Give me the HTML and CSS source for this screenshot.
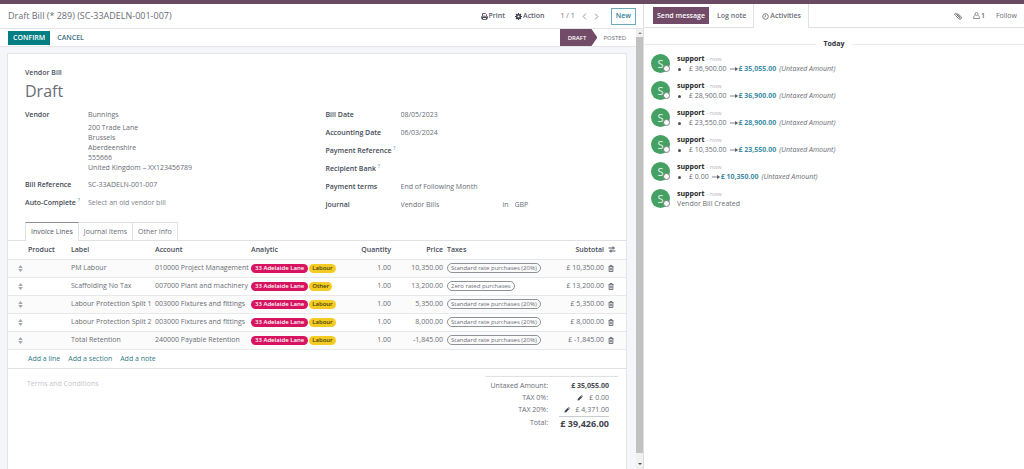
FILE: index.html
```html
<!DOCTYPE html>
<html lang="en">
<head>
<meta charset="utf-8">
<title>Draft Bill (* 289) (SC-33ADELN-001-007)</title>
<link rel="stylesheet" href="styles.css">
</head>
<body>
<svg class="defs" aria-hidden="true">
  <symbol id="trash" viewBox="0 0 12 14"><path d="M1 3.200h10M4 3V1h4v2M2.200 3.500V13h7.600V3.500M4.600 5.500v5.300M7.400 5.500v5.300" fill="none" stroke="currentColor" stroke-width="1.500"/></symbol>
  <symbol id="sort" viewBox="0 0 8 12"><path d="M4 0l4 5H0zM4 12L0 7h8z" fill="currentColor"/></symbol>
  <symbol id="pencil" viewBox="0 0 14 14"><path d="M1 13l1-4 7-7 3 3-7 7zM9.800 1.200L11 0l3 3-1.200 1.200z" fill="currentColor"/></symbol>
  <symbol id="arrow" viewBox="0 0 16 8"><path d="M0 4h12M11 1l4 3-4 3z" fill="currentColor" stroke="currentColor" stroke-width="1.400"/></symbol>
</svg>
<header class="navbar"></header>
<div class="layout">
  <main class="pane">
    <div class="control">
      <h1 class="crumb">Draft Bill (* 289) (SC-33ADELN-001-007)</h1>
      <div class="tools">
        <button class="tool"><svg class="ico" viewBox="0 0 14 14"><path d="M3 6V1h6l2 2v3M1 11V7.500Q1 6.500 2 6.500h10q1 0 1 1V11h-2V9H3v2zM3 9h8v4H3z" fill="none" stroke="currentColor" stroke-width="1.600"/></svg>Print</button>
        <button class="tool"><svg class="ico" viewBox="0 0 14 14"><circle cx="7" cy="7" r="3.700" fill="none" stroke="currentColor" stroke-width="3"/><path d="M7 0v3M7 11v3M0 7h3M11 7h3M2 2l2 2M10 10l2 2M12 2l-2 2M4 10l-2 2" stroke="currentColor" stroke-width="2.400"/></svg>Action</button>
      </div>
      <div class="pager">
        <span>1 / 1</span>
        <button class="page" aria-label="Previous"><svg viewBox="0 0 6 10"><path d="M5 1L1 5l4 4" fill="none" stroke="currentColor" stroke-width="1.400"/></svg></button>
        <button class="page" aria-label="Next"><svg viewBox="0 0 6 10"><path d="M1 1l4 4-4 4" fill="none" stroke="currentColor" stroke-width="1.400"/></svg></button>
      </div>
      <button class="new">New</button>
    </div>
    <div class="body">
      <div class="content">
        <div class="statusbar">
          <button class="confirm">CONFIRM</button>
          <button class="cancel">CANCEL</button>
          <div class="states"><span class="state current">DRAFT</span><span class="state">POSTED</span></div>
        </div>
        <div class="backdrop">
          <section class="sheet">
            <div class="title">
              <div class="kind">Vendor Bill</div>
              <h2 class="name">Draft</h2>
            </div>
            <div class="groups">
              <div class="group">
                <div class="field tall"><label for="vendor">Vendor</label>
                  <div><input id="vendor" value="Bunnings">
                  <address>200 Trade Lane<br>Brussels<br>Aberdeenshire<br>555666<br>United Kingdom – XX123456789</address></div></div>
                <div class="field"><label for="ref">Bill Reference</label><input id="ref" value="SC-33ADELN-001-007"></div>
                <div class="field"><label for="auto">Auto-Complete <sup>?</sup></label><input id="auto" placeholder="Select an old vendor bill"></div>
              </div>
              <div class="group wide">
                <div class="field"><label for="bdate">Bill Date</label><input id="bdate" value="08/05/2023"></div>
                <div class="field"><label for="adate">Accounting Date</label><input id="adate" value="06/03/2024"></div>
                <div class="field"><label for="pref">Payment Reference <sup>?</sup></label><input id="pref"></div>
                <div class="field"><label for="bank">Recipient Bank <sup>?</sup></label><input id="bank"></div>
                <div class="field"><label for="terms">Payment terms</label><input id="terms" value="End of Following Month"></div>
                <div class="field"><label for="journal">Journal</label><div class="journal"><input id="journal" value="Vendor Bills"><label class="in" for="currency">in</label><input id="currency" value="GBP"></div></div>
              </div>
            </div>
            <div class="tabs" role="tablist">
              <button class="tab active" role="tab" aria-selected="true">Invoice Lines</button>
              <button class="tab" role="tab">Journal Items</button>
              <button class="tab" role="tab">Other Info</button>
            </div>
            <table class="lines">
              <colgroup><col class="c-handle"><col class="c-product"><col class="c-label"><col class="c-account"><col class="c-analytic"><col class="c-qty"><col class="c-price"><col class="c-taxes"><col class="c-sub"><col class="c-del"></colgroup>
              <thead><tr><th></th><th>Product</th><th>Label</th><th>Account</th><th>Analytic</th><th class="num">Quantity</th><th class="num">Price</th><th>Taxes</th><th class="num">Subtotal</th><th><button class="icon" aria-label="Columns"><svg class="slide" viewBox="0 0 16 14"><path d="M1 4h13M10 1v6M2 10h13M6 7v6" stroke="currentColor" stroke-width="1.800"/></svg></button></th></tr></thead>
              <tbody>
                <tr><td><svg class="sort"><use href="#sort"/></svg></td><td></td><td>PM Labour</td><td>010000 Project Management</td><td><span class="tag pink">33 Adelaide Lane</span><span class="tag yellow">Labour</span></td><td class="num">1.00</td><td class="num">10,350.00</td><td><span class="tax">Standard rate purchases (20%)</span></td><td class="num">£ 10,350.00</td><td><button class="icon" aria-label="Delete"><svg class="trash"><use href="#trash"/></svg></button></td></tr>
                <tr><td><svg class="sort"><use href="#sort"/></svg></td><td></td><td>Scaffolding No Tax</td><td>007000 Plant and machinery</td><td><span class="tag pink">33 Adelaide Lane</span><span class="tag yellow">Other</span></td><td class="num">1.00</td><td class="num">13,200.00</td><td><span class="tax">Zero rated purchases</span></td><td class="num">£ 13,200.00</td><td><button class="icon" aria-label="Delete"><svg class="trash"><use href="#trash"/></svg></button></td></tr>
                <tr><td><svg class="sort"><use href="#sort"/></svg></td><td></td><td>Labour Protection Split 1</td><td>003000 Fixtures and fittings</td><td><span class="tag pink">33 Adelaide Lane</span><span class="tag yellow">Labour</span></td><td class="num">1.00</td><td class="num">5,350.00</td><td><span class="tax">Standard rate purchases (20%)</span></td><td class="num">£ 5,350.00</td><td><button class="icon" aria-label="Delete"><svg class="trash"><use href="#trash"/></svg></button></td></tr>
                <tr><td><svg class="sort"><use href="#sort"/></svg></td><td></td><td>Labour Protection Split 2</td><td>003000 Fixtures and fittings</td><td><span class="tag pink">33 Adelaide Lane</span><span class="tag yellow">Labour</span></td><td class="num">1.00</td><td class="num">8,000.00</td><td><span class="tax">Standard rate purchases (20%)</span></td><td class="num">£ 8,000.00</td><td><button class="icon" aria-label="Delete"><svg class="trash"><use href="#trash"/></svg></button></td></tr>
                <tr><td><svg class="sort"><use href="#sort"/></svg></td><td></td><td>Total Retention</td><td>240000 Payable Retention</td><td><span class="tag pink">33 Adelaide Lane</span><span class="tag yellow">Labour</span></td><td class="num">1.00</td><td class="num">-1,845.00</td><td><span class="tax">Standard rate purchases (20%)</span></td><td class="num">£ -1,845.00</td><td><button class="icon" aria-label="Delete"><svg class="trash"><use href="#trash"/></svg></button></td></tr>
              </tbody>
            </table>
            <div class="adds"><a href="#">Add a line</a><a href="#">Add a section</a><a href="#">Add a note</a></div>
            <div class="footer">
              <textarea class="terms" aria-label="Terms and Conditions" placeholder="Terms and Conditions"></textarea>
              <dl class="totals">
                <dt>Untaxed Amount:</dt><dd class="bold">£ 35,055.00</dd>
                <dt>TAX 0%:</dt><dd><svg class="pencil"><use href="#pencil"/></svg>£ 0.00</dd>
                <dt>TAX 20%:</dt><dd><svg class="pencil"><use href="#pencil"/></svg>£ 4,371.00</dd>
                <dt class="last">Total:</dt><dd class="grand">£ 39,426.00</dd>
              </dl>
            </div>
          </section>
        </div>
      </div>
      <div class="scroll" aria-hidden="true"><span class="up"></span><span class="thumb"></span><span class="down"></span></div>
    </div>
  </main>
  <aside class="chatter">
    <div class="chatbar">
      <div class="composers"><button class="send">Send message</button><button class="log">Log note</button></div>
      <button class="activities"><svg class="ico" viewBox="0 0 14 14"><circle cx="7" cy="7" r="5.600" fill="none" stroke="currentColor" stroke-width="1.800"/><path d="M7 3.500V7.500H4.500" fill="none" stroke="currentColor" stroke-width="1.400"/></svg>Activities</button>
      <div class="actions">
        <button class="icon" aria-label="Attach"><svg class="clip" viewBox="0 0 14 14"><path d="M4 4l6 6q1.500 1 .3-.8L4.500 3Q2.500 1.500 1.500 3T2.500 6l6 6q2.500 1.800 4-.2t-.5-3.800L6.500 2.500" fill="none" stroke="currentColor" stroke-width="1.600"/></svg></button>
        <button class="followers" aria-label="Followers"><svg class="ico" viewBox="0 0 14 14"><circle cx="7" cy="4" r="3" fill="none" stroke="currentColor" stroke-width="1.500"/><path d="M4 6.500Q1 7.500 1 13h12q0-5.500-3-6.500" fill="none" stroke="currentColor" stroke-width="1.500"/></svg>1</button>
        <button class="follow">Follow</button>
      </div>
    </div>
    <div class="day"><span>Today</span></div>
    <div class="thread">
      <article class="msg"><div class="avatar">S<i></i></div><div><div class="who"><b>support</b> <small>- now</small></div><ul><li>£ 36,900.00 <svg class="arrow"><use href="#arrow"/></svg><strong>£ 35,055.00</strong><em>(Untaxed Amount)</em></li></ul></div></article>
      <article class="msg"><div class="avatar">S<i></i></div><div><div class="who"><b>support</b> <small>- now</small></div><ul><li>£ 28,900.00 <svg class="arrow"><use href="#arrow"/></svg><strong>£ 36,900.00</strong><em>(Untaxed Amount)</em></li></ul></div></article>
      <article class="msg"><div class="avatar">S<i></i></div><div><div class="who"><b>support</b> <small>- now</small></div><ul><li>£ 23,550.00 <svg class="arrow"><use href="#arrow"/></svg><strong>£ 28,900.00</strong><em>(Untaxed Amount)</em></li></ul></div></article>
      <article class="msg"><div class="avatar">S<i></i></div><div><div class="who"><b>support</b> <small>- now</small></div><ul><li>£ 10,350.00 <svg class="arrow"><use href="#arrow"/></svg><strong>£ 23,550.00</strong><em>(Untaxed Amount)</em></li></ul></div></article>
      <article class="msg"><div class="avatar">S<i></i></div><div><div class="who"><b>support</b> <small>- now</small></div><ul><li>£ 0.00 <svg class="arrow"><use href="#arrow"/></svg><strong>£ 10,350.00</strong><em>(Untaxed Amount)</em></li></ul></div></article>
      <article class="msg"><div class="avatar">S<i></i></div><div><div class="who"><b>support</b> <small>- now</small></div><p>Vendor Bill Created</p></div></article>
    </div>
  </aside>
</div>
</body>
</html>
```

FILE: styles.css
```css
* { box-sizing: border-box; }
body { margin: 0; min-height: 100vh; display: flex; flex-direction: column; background: #fff; color: #696d75; font: 7px/10px "Open Sans", "Noto Sans", sans-serif; }
button, input, textarea { font: inherit; color: inherit; border: 0; padding: 0; margin: 0; background: none; }
input { width: 100%; min-width: 0; height: 10px; display: block; outline: none; }
svg { display: block; flex: none; }
.defs { display: none; }
h1, h2, p, ul, dl, dd { margin: 0; padding: 0; font-weight: 400; }
a { color: #2f7a88; text-decoration: none; }
.ico { width: 7px; height: 7px; }

.navbar { height: 4px; background: #6b4a63; }
.layout { flex: 1; display: grid; grid-template-columns: minmax(0, 644fr) minmax(0, 380fr); }
.pane { display: flex; flex-direction: column; border-right: 1px solid #dcdee1; }
.control { height: 25px; display: flex; align-items: center; padding: 0 7px 0 8px; border-bottom: 1px solid #e4e5e8; }
.crumb { font-size: 9px; line-height: 12px; margin-right: auto; }
.tools { display: flex; gap: 10px; margin-right: 16px; }
.tool { display: flex; align-items: center; gap: 1px; font-weight: 600; color: #5a606b; }
.tool .ico { color: #3c3f4c; }
.pager { display: flex; align-items: center; gap: 7px; margin-right: 12px; }
.page svg { width: 5px; height: 7px; color: #8d929a; }
.new { height: 17px; padding: 0 4px; border: 1px solid #6ba9bd; color: #2f7f96; font-weight: 600; }

.body { flex: 1; display: flex; }
.content { flex: 1; min-width: 0; display: flex; flex-direction: column; }
.statusbar { height: 18px; display: flex; align-items: center; gap: 7px; padding-left: 8px; border-bottom: 1px solid #e4e5e8; }
.confirm { height: 14px; padding: 0 5px; background: #017e84; color: #fff; font-weight: 600; }
.cancel { color: #3d7382; font-weight: 600; }
.states { margin-left: auto; display: flex; align-self: stretch; align-items: center; padding-right: 10px; gap: 6px; font-size: 6px; }
.current { align-self: stretch; display: flex; align-items: center; padding: 0 11px 0 8px; color: #fff; font-weight: 600; background: #714b67; clip-path: polygon(0 0, calc(100% - 6px) 0, 100% 50%, calc(100% - 6px) 100%, 0 100%); }
.backdrop { flex: 1; display: flex; background: #f5f6f9; padding: 6px 9px 0 7px; }
.sheet { flex: 1; min-width: 0; background: #fff; border: 1px solid #e1e4e8; border-bottom: 0; }
.title { padding: 14px 17px 0; }
.kind { font-weight: 600; color: #4b505c; }
.name { font-size: 16px; line-height: 26px; }
.groups { display: grid; grid-template-columns: 1fr 1fr; padding: 6px 0 0 17px; }
.field { display: grid; grid-template-columns: 63px 1fr; min-height: 18px; align-items: start; }
.wide .field { grid-template-columns: 75px 1fr; }
.tall { min-height: 70px; }
.field > label { color: #454a56; font-weight: 600; white-space: nowrap; }
sup { font-size: 5px; line-height: 5px; color: #3f8da5; font-weight: 400; }
address { font-style: normal; padding-top: 3px; white-space: nowrap; }
.journal { display: grid; grid-template-columns: 102px 12px 1fr; }
input::placeholder { color: #7d828b; opacity: 1; }

.tabs { display: flex; margin-top: 4px; padding-left: 17px; border-bottom: 1px solid #dfe1e4; }
.tab { height: 18px; padding: 0 5px; border: 1px solid #dfe1e4; border-left-width: 0; border-bottom: 0; }
.tab.active { border-left-width: 1px; border-top-color: #8c9097; margin-bottom: -1px; height: 19px; background: #fff; color: #4f5560; }
.lines { width: 100%; table-layout: fixed; border-collapse: collapse; }
.lines th, .lines td { height: 18px; padding: 0; text-align: left; white-space: nowrap; border-bottom: 1px solid #e7e8ea; }
.lines th { color: #454a56; font-weight: 600; }
.lines .num { text-align: right; padding-right: 4px; }
.lines tbody tr:nth-child(odd) { background: #fbfbfb; }
.c-handle { width: 20px; } .c-product { width: 43px; } .c-label { width: 84px; } .c-account { width: 96px; }
.c-analytic { width: 91px; } .c-qty { width: 53px; } .c-price { width: 52px; } .c-sub { width: 58px; } .c-del { width: 18px; }
.sort { width: 5px; height: 7px; margin-left: 10px; color: #a4a8ae; }
.icon { display: block; }
.trash { width: 6px; height: 7px; color: #4d525c; }
.slide { width: 8px; height: 7px; color: #454a56; }
.tag, .tax { display: inline-block; vertical-align: middle; font-size: 6px; }
.tag { height: 9px; line-height: 9px; padding: 0 4px; margin-right: 1px; border-radius: 5px; font-weight: 600; }
.tag + .tag { padding: 0 3px; }
.pink { background: #d6145f; color: #fff; }
.yellow { background: #f4cb23; color: #4a3d05; }
.tax { height: 10px; line-height: 8px; padding: 0 3px; border: 1px solid #8d9198; border-radius: 5px; }
.adds { display: flex; gap: 8px; height: 19px; align-items: center; padding-left: 20px; border-bottom: 1px solid #dfe1e4; }
.footer { display: flex; justify-content: space-between; padding: 7px 8px 0 19px; }
.terms { width: 200px; height: 60px; padding-top: 3px; resize: none; outline: none; }
.terms::placeholder { color: #c3c6cb; opacity: 1; }
.totals { width: 133px; display: grid; grid-template-columns: 63px 1fr; border-top: 1px solid #dfe1e4; padding: 3px 9px 0 0; grid-auto-rows: 12px; align-items: center; align-content: start; text-align: right; }
.totals dd { display: flex; align-items: center; justify-content: flex-end; gap: 6px; }
.totals .bold { font-weight: 700; color: #454a56; }
.totals .grand { margin-left: 11px; height: 15px; align-self: start; border-top: 1px solid #c9ccd1; font-size: 9px; font-weight: 700; color: #3f4450; white-space: nowrap; }
.last { align-self: start; padding-top: 2px; }
.pencil { width: 6px; height: 6px; color: #3f4450; }

.scroll { width: 7px; display: flex; flex-direction: column; align-items: center; background: #f1f1f1; }
.thumb { flex: 1; width: 7px; background: #c1c1c1; }
.up, .down { height: 8px; display: flex; align-items: center; }
.down { height: 16px; padding-top: 6px; }
.up::before, .down::before { content: ""; border: 2px solid transparent; border-top-width: 0; border-bottom: 2px solid #8a8a8a; }
.down::before { border-top: 2px solid #505050; border-bottom: 0 solid transparent; }

.chatbar { height: 24px; display: flex; }
.composers { display: flex; align-items: center; gap: 8px; padding: 0 7px 0 9px; border-bottom: 1px solid #dfe1e4; }
.send { height: 17px; padding: 0 4px; background: #714b67; color: #fff; font-weight: 600; }
.log, .activities { font-weight: 600; }
.activities { display: flex; align-items: center; gap: 1px; padding: 0 7px 0 8px; border: solid #dfe1e4; border-width: 0 1px; }
.actions { flex: 1; display: flex; align-items: center; justify-content: flex-end; gap: 11px; padding-right: 7px; border-bottom: 1px solid #dfe1e4; }
.clip { width: 8px; height: 8px; }
.followers { display: flex; align-items: center; gap: 1px; font-weight: 600; }
.day { display: flex; align-items: center; gap: 7px; padding-top: 11px; font-weight: 700; color: #2f333d; }
.day::before, .day::after { content: ""; flex: 1; border-top: 1px solid #e9eaec; }
.thread { padding: 5px 7px; }
.msg { display: flex; gap: 7px; height: 27px; }
.avatar { position: relative; flex: none; width: 19px; height: 19px; border-radius: 50%; background: #45a163; color: #e4f5e9; font-size: 11px; line-height: 19px; text-align: center; }
.avatar i { position: absolute; right: 0; bottom: 1px; width: 7px; height: 7px; border-radius: 50%; background: #fff; border: 1px solid #7b808a; }
.who b { color: #1c1f26; }
.who small { font-size: 6px; color: #b4b8be; }
.msg ul { list-style: none; }
.msg li { display: flex; align-items: center; white-space: nowrap; }
.msg li::before { content: ""; width: 3px; height: 3px; border-radius: 50%; background: #4b505c; margin: 0 8px 0 1px; }
.arrow { width: 8px; height: 4px; margin: 0 1px 0 3px; color: #4b505c; }
.msg strong { color: #3f8da5; }
.msg em { margin-left: 3px; }
```
